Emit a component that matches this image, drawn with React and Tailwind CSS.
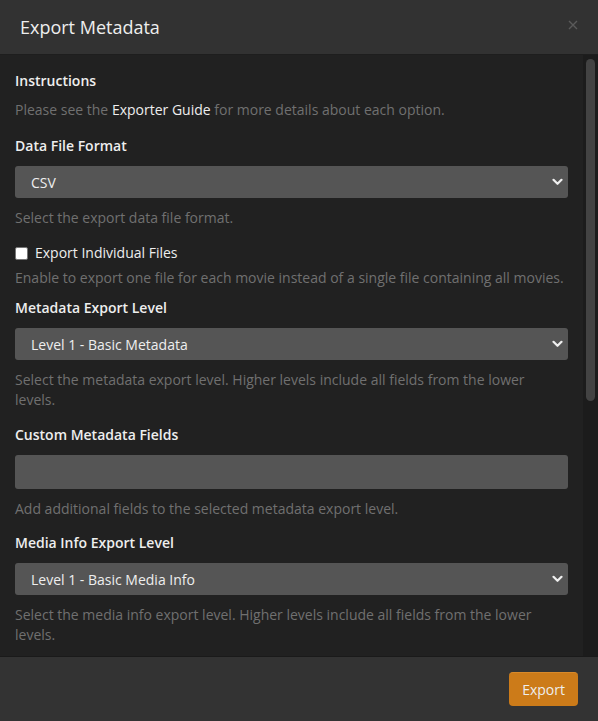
import React from "react";

function Chevron() {
  return (
    <svg width="11" height="8" viewBox="0 0 11 8" className="shrink-0">
      <path d="M1.5 1.8 L5.5 5.8 L9.5 1.8" stroke="#f0f0f0" strokeWidth="2.2" fill="none" strokeLinecap="round" strokeLinejoin="round" />
    </svg>
  );
}

function Select({ value }) {
  return (
    <div className="mt-2.5 h-8 rounded-[3px] bg-[#555555] flex items-center justify-between pl-4 pr-[5px] text-[14px] text-[#eeeeee]">
      <span>{value}</span>
      <Chevron />
    </div>
  );
}

function Label({ children }) {
  return <div className="h-5 leading-5 text-[14px] font-semibold text-[#eeeeee]">{children}</div>;
}

function Help({ children, className = "" }) {
  return <div className={"leading-5 text-[14px] text-[#707070] " + className}>{children}</div>;
}

export default function App() {
  return (
    <div
      className="w-[598px] h-[721px] flex flex-col bg-[#212121] overflow-hidden"
      style={{ fontFamily: '"Open Sans", "Noto Sans", sans-serif' }}
    >
      <div className="h-[55px] shrink-0 bg-[#323232] border-b border-[#1e1e1e] flex items-center justify-between pl-5 pr-[20px]">
        <div className="text-[18px] text-[#eeeeee] leading-6">Export Metadata</div>
        <svg width="10" height="10" viewBox="0 0 10 10" className="-mt-[4px]">
          <path d="M1 1 L9 9 M9 1 L1 9" stroke="#5a5a5a" strokeWidth="1.4" />
        </svg>
      </div>
      <div className="flex-1 flex min-h-0">
        <div className="flex-1 overflow-hidden pl-[15px] pr-[15px] pt-4">
          <div>
            <Label>Instructions</Label>
            <Help className="mt-[9px]">
              Please see the <span className="text-[#eeeeee]">Exporter Guide</span> for more details about each option.
            </Help>
          </div>
          <div className="mt-4">
            <Label>Data File Format</Label>
            <Select value="CSV" />
            <Help className="mt-2.5">Select the export data file format.</Help>
          </div>
          <div className="mt-[15px]">
            <div className="h-5 flex items-center gap-[7px]">
              <div className="w-[13px] h-[13px] rounded-[2px] bg-white border border-[#767676]" />
              <span className="text-[14px] text-[#eeeeee] leading-5">Export Individual Files</span>
            </div>
            <Help className="mt-[5px]">
              Enable to export one file for each movie instead of a single file containing all movies.
            </Help>
          </div>
          <div className="mt-2.5">
            <Label>Metadata Export Level</Label>
            <Select value="Level 1 - Basic Metadata" />
            <Help className="mt-2.5">
              Select the metadata export level. Higher levels include all fields from the lower levels.
            </Help>
          </div>
          <div className="mt-[15px]">
            <Label>Custom Metadata Fields</Label>
            <div className="mt-2.5 h-[34px] rounded-[3px] bg-[#555555]" />
            <Help className="mt-2.5">Add additional fields to the selected metadata export level.</Help>
          </div>
          <div className="mt-[14px]">
            <Label>Media Info Export Level</Label>
            <Select value="Level 1 - Basic Media Info" />
            <Help className="mt-2.5">
              Select the media info export level. Higher levels include all fields from the lower levels.
            </Help>
          </div>
        </div>
        <div className="w-[15px] shrink-0 bg-[#1c1c1c] pt-1 pl-[3px]">
          <div className="w-[9px] h-[342px] rounded-full bg-[#434343]" />
        </div>
      </div>
      <div className="h-[65px] shrink-0 bg-[#333333] border-t border-[#1a1a1a] flex items-center justify-end pr-5">
        <button className="h-[34px] px-[13px] rounded-[4px] bg-[#cc7b19] border-t border-[#d98a2a] text-[14px] text-[#eeeeee] leading-5">
          Export
        </button>
      </div>
    </div>
  );
}
